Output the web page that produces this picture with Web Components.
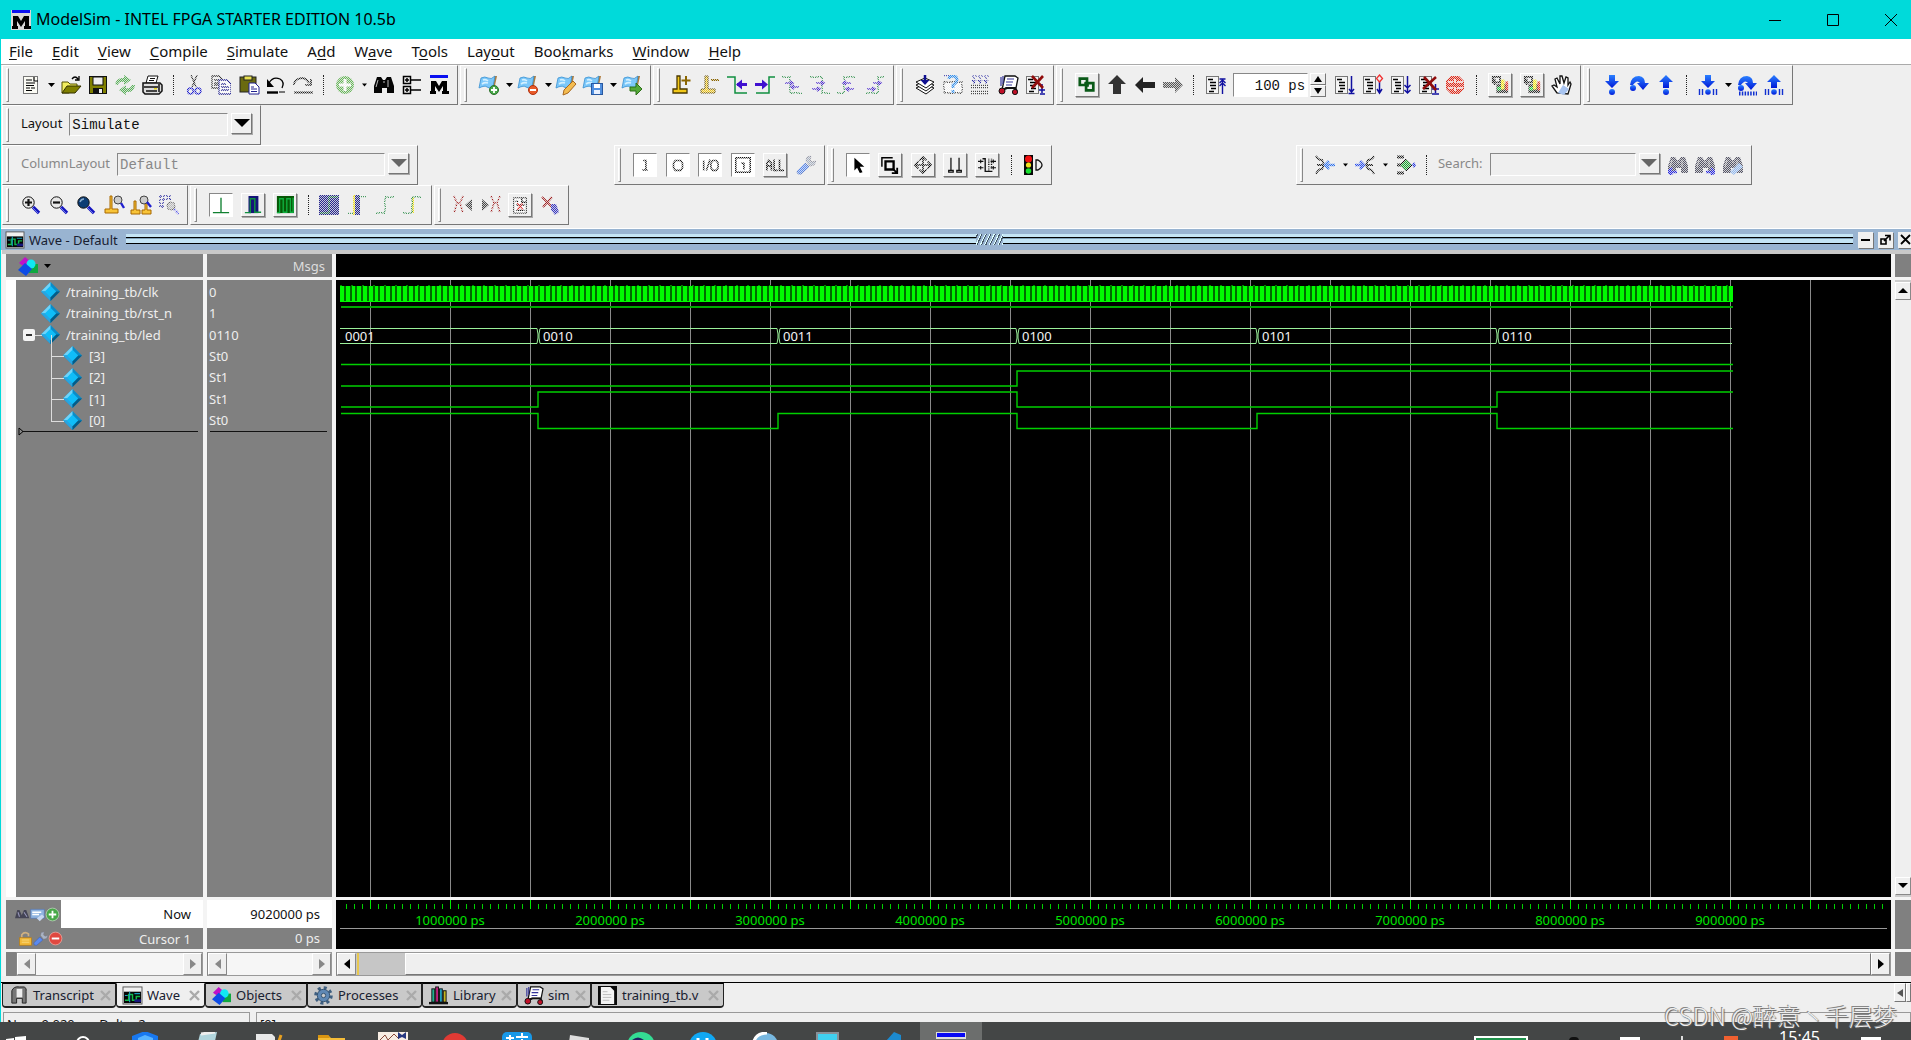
<!DOCTYPE html>
<html lang="en">
<head>
<meta charset="utf-8">
<title>ModelSim - INTEL FPGA STARTER EDITION 10.5b</title>
<style>
html,body{margin:0;height:100%;overflow:hidden}
body{font:13px/16px "Noto Sans","Noto Sans CJK SC",sans-serif;color:#111;background:#efefef}
</style>
</head>
<body>
<sim-app></sim-app>
<script>
const path = (d, s = '#000', w = 1, x = '') => `<path d="${d}" fill="none" stroke="${s}" stroke-width="${w}" ${x}/>`;
const fill = (d, f = '#000', x = '') => `<path d="${d}" fill="${f}" ${x}/>`;
const rect = (x, y, w, h, f, s = '') => `<rect x="${x}" y="${y}" width="${w}" height="${h}" fill="${f}" ${s ? `stroke="${s}"` : ''}/>`;
const circ = (x, y, r, f, s = '') => `<circle cx="${x}" cy="${y}" r="${r}" fill="${f}" ${s ? `stroke="${s}"` : ''}/>`;
const dash = 'stroke-dasharray="1 1"';

const page = rect(1.5, 1.5, 12, 17, '#f4f4f4', '#777') + path('M3 4.5h5M5 7.5h6M5 10.5h6M6 13.5h5M4 16.5h5', '#000', 1.4);
const flag = fill('M15 1h3l-3 14h-2z', '#b07c3c') + fill('M2 3q4-2 7 0t7-2l-2 11q-4 2-6 0t-8 1z', '#7cc8fa', 'stroke="#3a90d0" stroke-width=".8"') + path('M4 5q3-1 5 1M3 9q3-2 6-1', '#d4f0ff', 1.6);
const lens = f => circ(7.5, 7.5, 5.7, f, '#111') + path('M12 12l6 6', '#1515c0', 3.4) + path('M12 13l5 5', '#6a7ae8', 1);
const stairs = d => path(d, '#108030', 1.4, 'stroke-dasharray="1.5 1"');
const dot = (x, y, s) => path(`M${x - 4} ${y}h8M${x + s * 1} ${y - 2}l${s * 3} 2l${-s * 3} 2`, '#5230d0', 1.6);
const binoc = c => fill('M3 2h4l2 3h2l2-3h4l3 9v7h-7v-5H8v5H0v-7z', c) + path('M4 5l-2 7M14 5v7M9 7h2', '#bbb', 1);
const scissorsX = x => path(`M${x} 1l3 7-3 10M${x + 9} 1l-3 7 3 10M${x + 3} 8h3`, '#a02020', 1.6, 'stroke-dasharray="2 1"');
const diamonds = fill('M7 1l7 6-6 5-7-5z', '#c010c8') + rect(11, 8, 9, 9, '#0fa840') + circ(13, 8, 4.5, '#10e8f4') + fill('M7 7l7 6-6 7-8-6z', '#0d4be6');
const robot = fill('M7 1h10l3 2-2 10H8l-4 2z', '#fff', 'stroke="#111" stroke-width="1.3"') + path('M9 4h7M8 7h7M8 10h6M3 2v9M5 1v8', '#34349a', 1.2) + path('M4 15l5-2h8l2 3', '#111', 2) + circ(4, 16, 3, '#c01028', '#111') + circ(17, 17, 2.6, '#c01028', '#111');
const wave = rect(0, 1, 20, 18, '#f0f0f0', '#555') + rect(1, 6, 18, 12, '#050505') + path('M2 15h4V9h4v6h4v-4h4', '#12b848', 1.6) + path('M2 10h3M12 8h6M7 6v11', '#16a2c0', 1.2) + rect(12, 14, 7, 3, '#16167c');
const step = '<linearGradient id="b" x2="0" y2="1"><stop stop-color="#2a80ff"/><stop offset="1" stop-color="#0018d8"/></linearGradient>';
const down = 'M7 0h6v6h4l-7 7-7-7h4z', up = 'M7 13h6V7h4l-7-7-7 7h4z';
const curve = fill('M1 10Q2 1 10 1q6 1 6 7h4l-6 7-6-7h3Q8 4 4 10z', 'url(#b)') + circ(4, 13, 3, 'url(#b)');
const bars = path('M1.5 14v6M4.5 14v6M15.500 14v6M18.500 14v6', '#1030d0', 1.4);
const logo = rect(1, 0, 18, 3, '#0a10f0') + fill('M2 6h5l3 5 3-5h5v10h2v3h-7v-3h1v-5l-4 6-4-6v5h1v3H1v-3h1z', '#000');
const wrench = (c = '#5a8af0') => fill('M1 16l8-8 4 4-8 7q-4 1-4-3z', c, 'stroke="#3458b0" stroke-width=".6"') + fill('M10 6l1-4 4-1-1 4 2 2 4-1-2 4-4 1z', '#aab4c4', 'stroke="#778" stroke-width=".6"');

const ICONS = {
  doc: rect(2.5, 1.5, 14, 17, '#fbfbf4', '#777') + path('M5 5h6M5 8h9M5 10.500h8M5 13h4M10 13h4M5 15.500h6M13 2v4h4', '#000', 1.2),
  open: fill('M1 7h6l2 2h7v3L8 18H1z', '#f2ee60', 'stroke="#555000"') + fill('M1 18l5-7h14l-6 7z', '#808000', 'stroke="#333000"') + path('M11 4q3-4 6 0M18 1v4h-4', '#000', 1.3),
  save: rect(1.5, 1.5, 17, 17, '#808000', '#111') + rect(5, 2, 10, 8, '#eee', '#111') + rect(5, 13, 10, 6, '#111') + rect(11, 14, 3, 4, '#eee'),
  refresh: fill('M0 9Q2 2 9 3V0l7 5-7 5V7Q4 6 3 10z', '#58b058') + fill('M20 10q-1 8-9 7v3l-7-5 7-5v3q4 1 6-3z', '#58b058'),
  print: fill('M6 1h10l-2 7H4z', '#fff', 'stroke="#111"') + path('M8 3.500h5M7 5.500h5', '#111') + fill('M1 8h17l2 2v6l-3 3H3l-2-2z', '#ddd', 'stroke="#111" stroke-width="1.5"') + path('M2 12h14M4 16h11M17 9v8', '#111', 1.5) + rect(12, 13, 3, 1.5, '#e8d820'),
  cut: path('M7 0l5 12M13 0L8 12', '#333', 1.4) + `<circle cx="6.500" cy="16" r="2.800" fill="none" stroke="#2020d0" stroke-width="1.700"/><circle cx="14" cy="16" r="2.800" fill="none" stroke="#2020d0" stroke-width="1.700"/>`,
  copy: path('M1 1h7l3 3v9H1zM3 5h5M3 8h5M3 10h5', '#333', 1.3) + fill('M8 5h8l4 4v10H8z', '#fff', 'stroke="#202090" stroke-width="1.300"') + path('M10 9h5M10 12h8M10 15h8', '#202090', 1.3),
  paste: rect(1, 2, 16, 15, '#6a6a10', '#222') + rect(5, 1, 8, 4, '#e8e050', '#222') + fill('M10 8h6l4 4v7H10z', '#fff', 'stroke="#202090"') + path('M12 12h3M12 14h6M12 16.500h6', '#202090'),
  undo: path('M3 8q4-7 11-4 5 3 2 9', '#000', 1.3) + fill('M1 4v8h7z') + path('M1 17.500h11', '#000', 2.4) + path('M13 17h6'),
  redo: path('M16 8q-4-7-11-4-4 2-4 6M18 4v6h-6', '#222', 1.7) + path('M1 17.500h19', '#222', 2),
  plus: circ(10, 10, 9, '#6ab85c') + path('M10 4v12M4 10h12', '#fff', 3),
  find: binoc('#050505'),
  tree: path('M1.500 1.500h7v7h-7zM1.500 11.500h7v7h-7zM3 5h4M5 3v4M3 15h4M5 13v4M9 5h10M9 15h10', '#000', 1.5),
  logo,
  flagadd: flag + circ(15, 15, 4.5, '#48a848', '#2a702a') + path('M15 12v6M12 15h6', '#fff', 1.8),
  flagdel: flag + circ(15, 15, 4.5, '#e85a28', '#b03010') + path('M12 15h6', '#fff', 2),
  flagedit: flag + fill('M17 6l3 3-8 9-5 2 1-5z', '#f4bc50', 'stroke="#a86820"'),
  flagsave: flag + rect(8.5, 8.5, 11, 11, '#5090e0', '#2858a0') + rect(11, 9, 6, 4, '#fff') + rect(11, 15, 6, 4, '#e8f0ff'),
  flaggo: flag + fill('M8 12h6V8l6 6-6 6v-4H8z', '#54a838', 'stroke="#2c7018"'),
  curadd: fill('M5 1h3v13h7v4H1v-4h4z', '#f2c818', 'stroke="#4a3800" stroke-width="1.300"') + path('M14 1v9M9.500 5.500h9', '#8a6500', 2),
  curdel: fill('M5 1h3v13h7v4H1v-4h4z', '#f2c818', 'stroke="#5a4400"') + path('M11 5h8', '#8a6500', 2),
  prev: path('M0 2h8v16h12', '#109040', 1.5) + path('M10 9.500h10', '#4010d0', 3) + fill('M9 9.500l6-5v10z', '#4010d0'),
  next: path('M20 2h-6v16H1', '#109040', 1.5) + path('M0 9.500h9', '#4010d0', 3) + fill('M13 9.500l-6-5v10z', '#4010d0'),
  e1: stairs('M0 2h8v16h12') + dot(13, 12, -1) + dot(7, 8, 1),
  e2: stairs('M0 2h12v16h8') + dot(6, 14, 1) + dot(10, 8, 1),
  e3: stairs('M0 18h7V2h12') + dot(10, 8, -1) + dot(13, 14, -1),
  e4: stairs('M1 18h12V2h6') + dot(12, 8, 1) + dot(6, 14, 1),
  compile: fill('M1 13l9-4 9 4-8 6z', '#fff', 'stroke="#111"') + fill('M1 10l9-4 9 4-8 6z', '#fff', 'stroke="#111"') + fill('M1 7l9-4 9 4-8 6z', '#fff', 'stroke="#111"') + path('M10 0v7', '#101090', 2.5) + fill('M5.500 5h9l-4.500 5z', '#101090'),
  help: rect(1, 7, 18, 11, '#fff') + path('M1 7h18v11H1z', '#222', 1.3, 'stroke-dasharray="1.500 1"') + path('M1 1h12', '#2020a0', 1.5, dash) + path('M6 4q0-3 4-3t4 4q0 2-4 5v3M10 15v3', '#3090f0', 2.8),
  grid: path('M2 1h17M4 2v5M10 2v5M16 2v5M2 5l2 3 2-3M8 5l2 3 2-3M14 5l2 3 2-3', '#2020a0', 1.2, 'stroke-dasharray="2 1"') + path('M1 10h18M1 13h18M1 16h18M1 19h18', '#111', 1.7, dash),
  robot,
  stopsim: page + path('M17 9v9M14 15h6M15 19h5', '#1010a0', 1.5) + path('M7 1l11 12M18 1L7 13', '#900c0c', 2.6),
  link: path('M2 3h8v7H2zM9 8h8v8H9z', '#0a5a18', 3) + path('M7 8h4v4', '#0a5a18', 2),
  up: fill('M10 0l9 9h-5v10H6V9H1z', '#333'),
  left: fill('M0 10l8-8v5h12v6H8v5z', '#222'),
  right: fill('M20 10l-8-8v5H0v6h12v5z', '#555'),
  restart: page + path('M17.500 4v15M14.500 4h6M14.500 8l3-3 3 3M14.500 11l3-3 3 3', '#1010a0', 1.4),
  run: page + path('M17.500 1v16M14.500 18.500h6M15 14l2.500 3 2.500-3', '#1010a0', 1.5),
  runc: page + path('M17.500 6v12M15 14l2.500 4 2.500-4', '#1010a0', 1.5) + path('M17.500 0l3 3.500-3 3.500-3-3.500z', '#f03030', 1.3),
  runall: page + path('M17.500 1v17M14.500 10l3 3 3-3M14.500 15l3 3 3-3', '#1010a0', 1.5),
  brk: page + path('M17.500 9v9M14 14h7M14 19h7', '#1010a0', 1.5) + path('M6 2l12 13M18 2L5 14', '#900c0c', 2.6),
  stop: fill('M6 1h8l5 5v8l-5 5H6l-5-5V6z', '#e02818') + path('M3 7h5M3 13h5M12 7h6M12 13h6M10 4v4M10 12v4', '#fff', 1.6),
  mem: path('M2 1h8v6H2zM4 3v7', '#222', 2) + fill('M6 9h13v10H6z', '#333') + rect(11, 4, 4, 11, '#f4e810') + rect(16, 6, 3, 10, '#e83020') + rect(7, 12, 4, 4, '#20d040'),
  hand: fill('M5 18L0 11l2-1 3 2-2-8 2-1 3 6V1h2l2 7 2-6 2 1v7l2-3 1 2-3 10z', '#fff', 'stroke="#111" stroke-width="1.300"') + fill('M6 18l5-8 6 4-5 6z', '#a8c4f0'),
  into: step + fill(down, 'url(#b)') + circ(10, 17, 3, 'url(#b)'),
  over: step + curve,
  out: step + fill(up, 'url(#b)') + circ(10, 17, 3, 'url(#b)'),
  into2: step + fill(down, 'url(#b)') + circ(10, 17, 2.8, 'url(#b)') + bars,
  over2: step + curve + path('M2 18.500h18', '#1030d0', 4, 'stroke-dasharray="1.500 1.300"'),
  out2: step + fill(up, 'url(#b)') + circ(10, 17, 2.8, 'url(#b)') + bars,
  ti: path('M8 5h3v10M7 15.500h6', '#222', 1.8),
  to: path('M7 5h6l2 3v5l-2 3H7l-2-3V8z', '#222', 1.8),
  tio: path('M3 5v11M10 4L6 16M13 5h4l2 3v5l-2 3h-4l-2-3V8z', '#222', 1.8),
  tbox: path('M2 2h16v16H2zM8 8h3v7', '#111', 1.7),
  tall: path('M1 16V8l2-3 3 3v8M1 11h5M9 4v12h4M15 4v12h5', '#111', 1.8),
  wrench: wrench(),
  cursor: fill('M6 2v14l3-3 3 6 3-1-3-6h5z'),
  zoomsel: path('M1 12V2h12', '#000', 1.6) + path('M5 6h9v9H5z', '#000', 2.6) + path('M13 14l5 5M18 13v6h-6', '#000', 2),
  pan: path('M10 1v18M1 10h18M6 5l4-4 4 4M6 15l4 4 4-4M5 6l-4 4 4 4M15 6l4 4-4 4', '#111', 1.8),
  twocur: path('M5.500 2v14M14.500 2v14M3 16h5v2H3zM12 16h5v2h-5z', '#111', 1.4),
  edges: path('M5 3h3v14h8', '#111', 1.5) + path('M12 3v14M15 3v12', '#111', 1.5, dash) + path('M0 6h6M0 13h6M14 6h6M14 13h6M3 4v4M3 11v4M17 4v4M17 11v4', '#111', 1.2),
  light: rect(1, 0, 9, 20, '#080808') + circ(5.5, 4, 3.5, '#f01010') + circ(5.5, 10, 2.6, '#f0e020') + circ(5.5, 16, 2.8, '#18e030') + path('M13 5h2q8 5 0 10h-2z', '#111', 1.3),
  joinl: path('M1 1q2 4 6 4l2 5-2 4q-4 0-6 5M2 10h6', '#222', 1.8) + path('M11 10h9M14 6l-4 4 4 4', '#2a70f0', 2.6),
  joinr: path('M19 1q-2 4-6 4l-2 5 2 4q4 0 6 5M18 10h-6', '#222', 1.8) + path('M0 10h8M5 6l4 4-4 4', '#2a50f0', 2.6),
  node: path('M1 2h7M1 10h5M1 18h7', '#222', 3) + fill('M10 4l6 6-6 6-6-6z', '#1aa030', 'stroke="#111"') + fill('M18 7l2 3-2 3-2-3z', '#2030e0'),
  findl: binoc('#556') + path('M0 17h9M4 13l-4 4 4 3', '#2828e0', 2.4),
  findr: binoc('#556') + path('M11 17h9M16 13l4 4-4 3', '#2828e0', 2.4),
  findo: binoc('#556') + fill('M7 17l9-9 4 4-9 8z', '#90b8f0'),
  zin: lens('#e8e8e8') + path('M7.500 4v7M4 7.500h7', '#111', 2.2),
  zout: lens('#e8e8e8') + path('M4 7.500h7', '#111', 2.2),
  zfull: lens('#0c3c74') + path('M4 7q1-3 4-3', '#8ac', 1.4),
  zcur: fill('M6 1h2v13h6v4H1v-4h5z', '#f8c438', 'stroke="#a86800"') + circ(14, 5, 4, '#ccc', '#444') + path('M17 8l3 5', '#2020d0', 2.4),
  zcur2: fill('M3 6h2v9h4v4H0v-4h3zM14 6h2v9h4v4h-9v-4h3z', '#f8c438', 'stroke="#a86800"') + circ(13, 5, 4, '#ccc', '#444') + path('M16 7l4 5', '#2020d0', 2.4),
  zsel: path('M1 1h10v5M1 1v11h4M4 4h9M4 4v9', '#2828a0', 1.5, 'stroke-dasharray="2 1"') + circ(12, 11, 4, '#bbb', '#666') + path('M15 14l5 5', '#5a5af0', 2.4, 'stroke-dasharray="2 1"'),
  c1: path('M1 18.500h18M10 18V2', '#108030', 1.5),
  c2: rect(5, 0, 11, 19, '#141478') + path('M1 18.500h6V3h5v15h7', '#109040', 1.6),
  c3: rect(1, 0, 19, 19, '#065806') + path('M1 18.500h3V3h4v15h4V3h4v15h3V2', '#10b040', 1.5),
  g1: rect(0, 0, 20, 20, '#28288c') + path('M1 18h9V2h9', '#208040', 1.3),
  g2: rect(8, 0, 5, 20, '#28288c') + path('M7 0v20', '#f0e020', 2) + path('M1 18h5M12 2h8', '#108030', 1.6, dash),
  g3: stairs('M1 18h9V2h9'),
  g4: path('M10 2v16', '#f0e020', 2) + stairs('M0 18h9V2h10'),
  x1: scissorsX(1) + fill('M19 4v12l-7-6z', '#444'),
  x2: scissorsX(10) + fill('M1 4v12l7-6z', '#444'),
  xdoc: rect(3, 2, 14, 17, '#fff', '#111') + path('M12 2v5h5M5 6h3M6 10h9M6 16h9', '#111', 1.6) + path('M7 8l6 7M13 8l-6 7', '#e02020', 1.6),
  xpen: path('M2 2l12 12M12 2L3 12', '#a02020', 2) + fill('M11 9l5 0 3 8-4 3-4-5z', '#3838c0'),
  diamonds, wave,
  transcript: fill('M3 18V5q2-5 8-4h5q3 1 2 5v12h-4v-5H8v5z', '#777', 'stroke="#222"') + rect(8, 3, 6, 9, '#eee'),
  gear: `<circle cx="10" cy="10" r="8" fill="none" stroke="#3f5f80" stroke-width="3.500" stroke-dasharray="3.140"/>` + circ(10, 10, 6.5, '#5f88b4', '#34526f') + circ(10, 10, 2.3, '#ccc', '#34526f'),
  library: rect(3, 3, 3, 14, '#20b090', '#111') + rect(7, 1, 3, 16, '#c02080', '#111') + rect(11, 3, 3, 14, '#20a0c0', '#111') + rect(15, 5, 3, 12, '#c8b820', '#111') + path('M0 18h20', '#111', 2.5),
  file: rect(0, 0, 20, 20, '#0a0a0a') + fill('M3 1h10l4 4v14H3z', '#f4f4f4') + path('M5 6h5M5 9h9M5 12h9M5 15h7', '#bbb'),
  a: fill('M0 15l3-11h3l3 7 3-7h3l4 11z', '#445') + path('M4 7l2 6M12 7l4 6', '#99b', 1.4),
  b: rect(1, 3, 18, 12, '#8fb4e0', '#5878b0') + path('M3 7h12M3 10h9', '#fff', 2) + fill('M9 15l7-5 3 3-6 6z', '#c8d8f0'),
  add: circ(10, 10, 8.5, '#48a848', '#bcd8bc') + path('M10 5v10M5 10h10', '#fff', 2.4),
  lock: path('M5 9V5q4-5 9-1v3', '#d0b080', 2.2) + rect(2, 9, 16, 10, '#f2b838', '#b47c18') + path('M5 12h10M5 15h10', '#f8d880', 1.2),
  del: circ(10, 10, 8.5, '#e04840', '#f0a8a0') + path('M5 10h10', '#fff', 2.6)
};
const svg = (n, s = 20) => `<svg width="${s}" height="${s}" viewBox="0 0 20 20" overflow="visible" aria-hidden="true">${ICONS[n] || ''}</svg>`;
const RESET = `*{box-sizing:border-box}button{font:inherit;color:inherit;border:0;padding:0;background:none;display:block}svg{display:block}`;

function define(name, css, html) {
  customElements.define(name, class extends HTMLElement {
    connectedCallback() {
      if (this.shadowRoot) return;
      this.attachShadow({mode: 'open'}).innerHTML =
        `<style>${RESET}${css}</style>${typeof html === 'function' ? html(k => this.getAttribute(k)) : html}`;
    }
  });
}

/* Icon button; frame="up" is raised, frame="down" is sunken. */
define('tool-button', `
  :host{display:block;flex:none;width:20px}
  :host([frame]){width:24px}
  button{width:100%;height:20px}
  :host([frame]) button{height:24px;display:grid;place-items:center;border:1px solid;border-color:#fff #777 #777 #fff;box-shadow:1px 1px 0 #aaa}
  :host([frame=down]) button{background:#fff;border-color:#888 #fff #fff #888;box-shadow:none}
  :host([off]) svg{-webkit-mask:repeating-conic-gradient(#000 0 25%,#0003 0 50%) 0 0/2px 2px;mask:repeating-conic-gradient(#000 0 25%,#0003 0 50%) 0 0/2px 2px}
`, g => `<button aria-label="${g('icon')}">${svg(g('icon'), g('frame') ? 18 : 20)}</button>`);

define('drop-arrow', `:host{display:block;flex:none;width:5px}
  button{width:5px;height:20px;display:grid;place-items:center}
  :host([off]) svg{width:5px}`,
  g => `<button aria-label="more"><svg width="7" height="4" viewBox="0 0 7 4"><path d="M0 0h7l-3.500 4z"/></svg></button>`);

define('tool-sep', `:host{display:block;flex:none;width:7px}i{display:block;margin:auto;width:0;height:20px;border-left:1px dotted #222}`, '<i></i>');

define('tool-bar', `
  :host{display:flex;flex:none;align-items:center;justify-content:space-between;height:40px;padding:0 8px 0 18px;
    border:1px solid;border-color:#fff #777 #777 #fff;position:relative}
  i{position:absolute;left:3px;top:2px;bottom:2px;width:3px;border:1px solid;border-color:#fff #888 #888 #fff}
`, '<i></i><slot></slot>');

define('combo-box', `
  :host{display:flex;align-items:center;flex:1;padding-bottom:2px}
  :host([off]){color:#888}
  label{padding-right:7px;line-height:20px;padding-bottom:2px}
  .f{flex:1;display:flex;gap:3px}
  select{appearance:none;flex:1;min-width:0;height:23px;margin:0;padding:1px 2px 0;border:1px solid;border-color:#888 #fff #fff #888;border-radius:0;background:none;color:inherit;font:14px/20px "Liberation Mono",monospace;opacity:1}
  span{width:21px;height:21px;border:1px solid;border-color:#fff #777 #777 #fff;box-shadow:1px 1px 0 #aaa;display:grid;place-items:center;pointer-events:none}
`, g => `<label for="s">${g('label')}</label><div class="f"><select id="s">${g('value') ? `<option>${g('value')}</option>` : ''}</select><span><svg width="16" height="8"><path d="M0 0h16l-8 8z" fill="${g('off') !== null ? '#666' : '#000'}"/></svg></span></div>`);

define('run-length', `
  :host{display:flex;flex:none;width:93px;gap:2px}
  input{width:75px;height:24px;margin:0;padding:1px 2px 0 0;border:1px solid;border-color:#888 #fff #fff #888;border-radius:0;background:#fff;text-align:right;font:14px/20px "Liberation Mono",monospace;color:#111}
  div{width:16px}
  button{width:16px;height:12px;border:1px solid;border-color:#fff #777 #777 #fff;display:grid;place-items:center}
`, `<input aria-label="Run length" value="100 ps"><div><button aria-label="Increase"><svg width="8" height="6"><path d="M4 0l4 6H0z"/></svg></button><button aria-label="Decrease"><svg width="8" height="6"><path d="M0 0h8L4 6z"/></svg></button></div>`);

define('title-bar', `
  :host{display:flex;align-items:center;height:39px;background:#00dada;padding-left:11px;font-size:15px;color:#000}
  .l{width:20px;height:20px;background:#d8d8d8;margin-right:5px}
  h1{font:inherit;font-size:16px;margin:0;padding-bottom:2px;flex:1}
  button{width:58px;height:39px;display:grid;place-items:center}
  .w{display:flex;margin-right:-9px}
`, `<div class="l">${svg('logo')}</div><h1>ModelSim - INTEL FPGA STARTER EDITION 10.5b</h1>
  <div class="w"><button aria-label="Minimize"><svg width="12" height="12"><path d="M0 6.500h12" stroke="#000"/></svg></button><button aria-label="Maximize"><svg width="12" height="12"><path d="M.5.5h11v11H.5z" stroke="#000" fill="none"/></svg></button><button aria-label="Close"><svg width="12" height="12"><path d="M0 0l12 12M12 0L0 12" stroke="#000"/></svg></button></div>`);

define('menu-bar', `:host{display:block}
  nav{display:flex;gap:19px;height:26px;background:#fff;padding:0 8px 2px;align-items:center;font-size:15px;border-bottom:1px solid #aaa}
  u{text-underline-offset:2px}`,
  '<nav>' + ['_File', '_Edit', '_View', '_Compile', '_Simulate', 'A_dd', 'W_ave', 'T_ools', 'Lay_out', 'Boo_kmarks', '_Window', '_Help']
    .map(t => `<button>${t.replace(/_(.)/, '<u>$1</u>')}</button>`).join('') + '</nav>');

/* Toolbar items: '|' separator, 'v' drop arrow, '-name' greyed, '^name' raised, '_name' sunken. */
const items = s => s.split(' ').map(t => {
  if (t === '|') return '<tool-sep></tool-sep>';
  if (t === 'v') return '<drop-arrow></drop-arrow>';
  if (t === '-v') return '<drop-arrow off></drop-arrow>';
  if (t === '#') return '<run-length></run-length>';
  const m = t.match(/^([\^_]?)(-?)(.*)$/);
  return `<tool-button icon="${m[3]}" ${m[1] ? `frame="${m[1] === '^' ? 'up' : 'down'}"` : ''} ${m[2] ? 'off' : ''}></tool-button>`;
}).join('');
const bar = (w, s, c = '') => `<tool-bar class="${c}" style="width:${w}px">${s[0] === '<' ? s : items(s)}</tool-bar>`;

define('tool-area', `
  :host{display:block;padding-left:1px}
  .r{display:flex;gap:2px}
  .far{margin-left:194px}.farther{margin-left:242px}
  .search combo-box{flex:none;width:222px}
`, `
<div class="r">
  ${bar(456, 'doc v open save -refresh print | -cut -copy paste undo -redo | -plus -v find tree logo')}
  ${bar(191, 'flagadd v flagdel v flagedit flagsave v flaggo')}
  ${bar(241, 'curadd -curdel prev next -e1 -e2 -e3 -e4')}
  ${bar(158, 'compile -help -grid robot stopsim')}
  ${bar(525, '^link up left -right | restart # run runc runall brk -stop | ^-mem ^-mem hand')}
  ${bar(210, 'into over out | into2 v over2 out2')}
</div>
<div class="r">${bar(259, '<combo-box label="Layout" value="Simulate"></combo-box>')}</div>
<div class="r">
  ${bar(416, '<combo-box off label="ColumnLayout" value="Default"></combo-box>')}
  ${bar(211, '_-ti _-to _-tio _-tbox ^-tall -wrench', 'far')}
  ${bar(225, '_cursor ^zoomsel ^-pan ^twocur ^edges | light')}
  ${bar(456, '<!-- -->' + items('-joinl -v -joinr -v -node |') + '<combo-box off label="Search:"></combo-box>' + items('-findl -findr -findo'), 'farther search')}
</div>
<div class="r">
  ${bar(186, 'zin zout zfull zcur zcur2 -zsel')}
  ${bar(242, '_c1 ^c2 ^c3 | -g1 -g2 -g3 -g4')}
  ${bar(135, '-x1 -x2 ^-xdoc -xpen')}
</div>`);

define('pane-title', `
  :host{display:flex;align-items:center;height:22px;background:#99b4d1;padding-left:5px;margin-top:3px;border-top:1px solid #fff}
  h2{font:inherit;margin:0 8px 0 5px;color:#182030}
  .s{flex:1;height:11px;display:flex;justify-content:center;background:linear-gradient(#c4e4f4 3px,#000 3px 4px,#7fa0b8 4px 5px,#c4e4f4 5px 9px,#000 9px 10px,transparent 10px)}
  .g{width:27px;background:repeating-linear-gradient(115deg,#dff 0 1px,#456 1px 2px,#99b4d1 2px 4px)}
  .b{display:flex;gap:5px;margin:0 -2px 0 5px}
  .b button{width:15px;height:16px;background:#f0f0f0;box-shadow:1px 1px 0 #777;display:grid;place-items:center}
`, `${svg('wave', 18)}<h2>Wave - Default</h2><div class="s"><div class="g"></div></div>
<div class="b"><button aria-label="Minimize pane"><svg width="11" height="11"><path d="M1 5h9v2H1z"/></svg></button><button aria-label="Undock pane"><svg width="11" height="11"><path d="M1 5h5v5H1zM4 7l5-5M5 1.500h5v5" fill="none" stroke="#000" stroke-width="1.600"/></svg></button><button aria-label="Close pane"><svg width="11" height="11"><path d="M1 1l9 9M10 1l-9 9" stroke="#000" stroke-width="1.800"/></svg></button></div>`);

const gem = '<svg class="gem" width="19" height="19" viewBox="0 0 20 20"><path d="M10 0l10 10-10 10L0 10z" fill="#0a8cc8"/><path d="M10 0v10H0z" fill="#70d4fa"/><path d="M0 10h10v10z" fill="#2aa4e0"/><path d="M20 10H10v10z" fill="#045c88"/><path d="M10 4l6 6-6 6-6-6z" fill="#10bdf8"/></svg>';
define('signal-names', `
  :host{display:block;background:#808080;border-left:10px solid #fff;color:#eee}
  ul{list-style:none;margin:0;padding:1px 0 0;height:151px;display:flex;flex-direction:column}
  li{flex:1;display:flex;align-items:center;padding-left:25px;gap:6px;position:relative}
  li.k{padding-left:47px;gap:7px}
  .k::before{content:"";position:absolute;left:35px;top:-10px;height:21px;width:12px;border:solid #ddd;border-width:0 0 1px 1px}
  .gem{flex:none}
  button{position:absolute;left:7px;width:12px;height:12px;background:#f4f4f4;border-radius:2px}
  button::before{content:"";position:absolute;left:3px;right:3px;top:5px;height:2px;background:#333}
  button::after{content:"";position:absolute;left:12px;top:6px;width:7px;height:1px;background:#ddd}
  .end{height:1px;background:#111;margin:0 5px 0 4px;position:relative}
  .end svg{position:absolute;left:-2px;top:-4px}
`, '<ul>' + ['/training_tb/clk', '/training_tb/rst_n'].map(t => `<li>${gem}<span>${t}</span></li>`).join('') +
  `<li><button aria-label="Collapse"></button>${gem}<span>/training_tb/led</span></li>` +
  [3, 2, 1, 0].map(n => `<li class="k">${gem}<span>[${n}]</span></li>`).join('') + '</ul><div class="end"><svg width="6" height="9"><path d="M1 1l4 3.500L1 8z" fill="#888" stroke="#000"/></svg></div>');

define('signal-values', `
  :host{display:block;background:#808080;color:#eee}
  ul{list-style:none;margin:0;padding:1px 0 0 2px;height:151px;display:flex;flex-direction:column}
  li{flex:1;display:flex;align-items:center}
  .end{height:1px;background:#111;margin:0 5px 0 3px}
`, '<ul>' + ['0', '1', '0110', 'St0', 'St1', 'St1', 'St0'].map(t => `<li>${t}</li>`).join('') + '</ul><div class="end"></div>');

/* Waveforms: 80px per half microsecond, bus value changes every 240px. */
const T = [202, 442, 681, 921, 1161], END = 1397;
function waves() {
  let s = '';
  for (let i = 0; i < 19; i++) s += `<path d="M${34.5 + 80 * i} 0V2000" stroke="#8a8a8a"/>`;
  s += '<rect x="4" y="6" width="1393" height="16" fill="#00fa00"/><path d="M4 5.500H1397" stroke="#008000" stroke-dasharray="2 9"/>';
  let gaps = '';
  for (let k = 0; k < 243; k++) gaps += `M${Math.round(9 + k * 40 / 7)} 6v15`;
  s += `<path d="${gaps}" stroke="#003c00" stroke-width="1.500"/>`;
  s += `<path d="M5 27H${END}" stroke="#00a800" stroke-width="2"/>`;
  const pts = [4, ...T, END];
  ['0001', '0010', '0011', '0100', '0101', '0110'].forEach((v, i) => {
    const a = pts[i], b = pts[i + 1], l = i ? `M${a + 1} 56v-2l1-5.500` : `M${a} 48.500`, r = i < 5;
    s += `<path d="${l}H${b - 1}${r ? 'l1 5.500v2' : ''}M${i ? a + 1 + ' 56v2l1 5.500' : a + ' 63.500'}H${b - 1}${r ? 'l1-5.500v-2' : ''}" stroke="#9af09a" fill="none"/>`;
    s += `<text x="${i ? a + 5 : 9}" y="61" fill="#f4f4f4">${v}</text>`;
  });
  const bit = (hi, lo, bits) => {
    let d = `M5 ${bits[0] ? hi : lo}`;
    T.forEach((x, i) => { d += `H${x}V${bits[i + 1] ? hi : lo}`; });
    return `<path d="${d}H${END}" fill="none" stroke="#00d000" stroke-width="1.400"/>`;
  };
  return s + bit(70, 84.5, [0, 0, 0, 0, 0, 0]) + bit(91, 106, [0, 0, 0, 1, 1, 1]) + bit(112, 127, [0, 1, 1, 0, 0, 1]) + bit(133.5, 148.5, [1, 0, 1, 0, 1, 0]);
}
define('wave-view', ':host{display:block;background:#000;overflow:hidden;min-height:0}svg{width:100%;height:100%}', `<svg aria-label="waveforms">${waves()}</svg>`);

function ruler() {
  let s = '<path d="M4 28.500H1551" stroke="#999"/>';
  for (let x = 10; x < 1550; x += 8) s += (x - 34) % 80 ? `<path d="M${x + .5} 4v5" stroke="#00d000"/>` : `<path d="M${x + .5} 0v9" stroke="#00e800"/>`;
  for (let i = 1; i < 10; i++) s += `<text x="${160 * i - 46}" y="25" text-anchor="middle" fill="#00e400">${i}000000 ps</text>`;
  return s;
}
define('time-ruler', ':host{display:block;background:#000;overflow:hidden}svg{width:100%;height:49px}', `<svg>${ruler()}</svg>`);

define('cursor-names', `
  :host{display:block;background:#808080}
  div{display:flex;height:28px;color:#111}
  .c{height:21px;color:#eee}
  .i{display:flex;width:55px;height:auto;align-items:center;padding-left:9px}
  .c .i{padding-left:12px;width:59px}
  .t{flex:1;align-items:center;justify-content:flex-end;padding-right:12px;display:flex;background:#fff}
  .c .t{background:none;color:inherit}
`, `<div><div class="i">${svg('a', 15)}${svg('b', 15)}${svg('add', 15)}</div><span class="t">Now</span></div>
<div class="c"><div class="i">${svg('lock', 15)}${svg('wrench', 15)}${svg('del', 15)}</div><span class="t">Cursor 1</span></div>`);
define('cursor-values', `
  :host{display:block;background:#808080}
  div{height:28px;line-height:28px;background:#fff;color:#111;text-align:right;padding-right:12px}
  .c{height:21px;line-height:21px;background:none;color:#eee}
`, '<div>9020000 ps</div><div class="c">0 ps</div>');

const tri = {l: 'M7 0v10L1 5z', r: 'M1 0v10l6-5z', u: 'M0 7h10L5 2z', d: 'M0 2h10L5 7z'};
define('scroll-strip', `
  :host{display:flex;background:#f6f6f6;border:1px solid #999;border-left-color:#888}
  :host([vertical]){flex-direction:column}
  button{flex:none;width:19px;display:grid;place-items:center;background:#efefef;border:1px solid;border-color:#fff #888 #888 #fff}
  :host([vertical]) button{width:100%;height:18px}
  :host([vertical]){border-width:2px 0;border-color:#ccc;background:#efefef}
  .t{flex:1;display:flex}
  :host([live]) .t{background:#c6c6c6}
  .m{width:48px;border-left:2px solid #e8c850;margin-left:1px}
  .h{flex:1;background:#efefef;border:1px solid;border-color:#fff #777 #777 #fff}
`, g => {
  const v = g('vertical') !== null, c = v || g('live') !== null ? '#000' : '#888';
  const b = (k, n) => `<button aria-label="${n}"><svg width="10" height="10" viewBox="${v ? '0 0 10 10' : '-1 0 10 10'}"><path d="${tri[k]}" fill="${c}"/></svg></button>`;
  return b(v ? 'u' : 'l', 'back') + `<div class="t">${g('live') !== null ? '<div class="m"></div><div class="h"></div>' : ''}</div>` + b(v ? 'd' : 'r', 'forward');
});

define('wave-pane', `
  :host{display:flex;flex-direction:column;flex:1;min-height:0}
  .g{flex:1;min-height:0;display:grid;grid-template-columns:197px 125px minmax(0,1fr) 16px;grid-template-rows:23px minmax(0,1fr) 49px 24px;gap:3px 4px;background:#f4f4f4;border-top:4px solid #c8c8c8;margin-left:1px;padding-left:4px}
  .h{background:#808080;color:#ddd;display:flex;align-items:center}
  .k{background:#000}
  .x{padding-left:12px;gap:6px}
  .m{justify-content:flex-end;padding-right:7px}
  .p{background:#808080;padding-left:10px;display:grid}
`, `<pane-title></pane-title><div class="g">
  <div class="h x">${svg('diamonds')}<drop-arrow></drop-arrow></div><div class="h m">Msgs</div><div class="k"></div><div class="h"></div>
  <signal-names></signal-names><signal-values></signal-values><wave-view></wave-view><scroll-strip vertical></scroll-strip>
  <cursor-names></cursor-names><cursor-values></cursor-values><time-ruler></time-ruler><div class="h"></div>
  <div class="p"><scroll-strip></scroll-strip></div><scroll-strip></scroll-strip><scroll-strip live></scroll-strip><div class="h"></div></div>`);

define('tab-item', `
  :host{display:block;flex:none}
  div{height:25px;display:flex;align-items:center;background:#c9c9c9;border:1px solid #222;border-top-color:#000;border-bottom-width:2px;border-radius:0 0 4px 4px;padding:0 4px 0 6px;color:#182030}
  :host([on]) div{background:#efefef;border-top-color:#efefef}
  span{flex:1;padding-left:5px}
  button{width:11px;height:11px}
`, g => `<div>${svg(g('icon'), 19)}<span>${g('text')}</span><button aria-label="Close ${g('text')}"><svg width="11" height="11"><path d="M1 1l9 9M10 1l-9 9" stroke="#aaa" stroke-width="2.400"/></svg></button></div>`);
define('tab-strip', `
  :host{display:flex;height:30px;margin-top:6px;border-top:1px solid #000;padding-left:1px}
  .n{margin-left:auto;display:flex}
  .n button{height:19px;width:12px;background:#efefef;border:1px solid;border-color:#fff #777 #777 #fff;display:grid;place-items:center}
  .n button:last-child{width:5px}
`, [['transcript', 'Transcript', 114], ['wave', 'Wave', 89], ['diamonds', 'Objects', 102], ['gear', 'Processes', 115], ['library', 'Library', 95], ['robot', 'sim', 74], ['file', 'training_tb.v', 133]]
  .map(([i, t, w], n) => `<tab-item icon="${i}" text="${t}" style="width:${w}px" ${n === 1 ? 'on' : ''}></tab-item>`).join('') +
  '<div class="n"><button aria-label="Scroll tabs"><svg width="6" height="8"><path d="M6 0v8L0 4z" fill="#555"/></svg></button><button aria-label="Scroll tabs right"></button></div>');

define('status-bar', `
  :host{display:flex;gap:6px;height:10px;padding-left:2px;overflow:hidden;line-height:16px}
  div{border:1px solid #999;border-bottom:0;height:24px;padding:3px 3px 0}
  .a{width:247px;white-space:pre}.b{flex:1}
`, '<div class="a">Now: 9,020 ns  Delta: 2</div><div class="b">[0]</div>');

const TASKS = [
  '<path d="M0 7l8-1v8H0zM9 5l11-1v10H9z" fill="#fff"/>',
  '<circle cx="15" cy="11" r="6" fill="none" stroke="#fff" stroke-width="2"/>',
  '<path d="M2 4L15-1l13 5v14H2z" fill="#1878f0"/><path d="M8 6l7-3 8 3v12H8z" fill="#58b4ff"/>',
  '<path d="M8 2l17-2-4 18H4z" fill="#b0d4dc"/><path d="M9 2l14-2" stroke="#eee" stroke-width="3"/>',
  '<path d="M2 2h16l3 3v13H2z" fill="#e8e8e8"/><path d="M27 3l-5 15" stroke="#e8a020" stroke-width="3"/>',
  '<path d="M2 3h10l3 3h14v12H2z" fill="#f4bc38"/><path d="M2 3h10l2 3H2z" fill="#d89410"/>',
  '<path d="M0 0h30v18H0z" fill="#f8eee4"/><path d="M2 8l5-5 3 5 6-6 5 5" stroke="#884838" fill="none"/><path d="M20 0l4 3 4-3v7l-4-2-4 2z" fill="#283880"/>',
  '<circle cx="15" cy="14" r="13" fill="#e03a34"/>',
  '<rect width="30" height="24" y="0" rx="5" fill="#1898e8"/><path d="M8 3v13M4 6h8M20 1v5M14 5h12M20 7v8" stroke="#fff" stroke-width="2"/>',
  '<path d="M6 3l19 3v12H4z" fill="#ddd"/>',
  '<circle cx="15" cy="14" r="14" fill="#34dc94"/><path d="M5 9q7-7 14 0v9H5z" fill="#202060"/>',
  '<circle cx="15" cy="14" r="14" fill="#10a8f4"/><path d="M10 6v3M19 6v3" stroke="#fff" stroke-width="3"/>',
  '<circle cx="16" cy="13" r="12" fill="#78b8e0"/><path d="M3 14Q4 1 17 1" stroke="#fff" stroke-width="3" fill="none"/>',
  '<rect x="4" width="23" height="20" fill="#889098"/><rect x="6" y="2" width="19" height="16" fill="#40d0f0"/>',
  '<path d="M20 0l7 3v15H10l2-9z" fill="#1c8ad0"/>',
  '<path d="M0 0h30v7H0z" fill="#ddd"/><path d="M1 1h28v4H1z" fill="#0808f4"/>'
];
define('task-bar', `
  :host{display:flex;height:18px;background:#444646;overflow:hidden;color:#fff;position:relative;z-index:1}
  nav{display:flex;margin-left:-10px}
  button{width:62px;height:40px;padding:10px 16px 0;display:flex;align-items:flex-start}
  button:last-child{background:#6c6e6d}
  .t{margin-left:auto;display:flex;padding-top:14px;gap:41px;align-items:flex-start}
  time{font-size:16px;line-height:16px;margin-top:-7px}
  .n{width:20px;height:6px;background:#fff;margin:1px 30px 0 0}
  .e{width:54px;height:5px;border:2px solid #fff;background:#20924c;border-bottom:0}
  .c{width:10px;height:4px;background:#111;border-radius:5px 5px 0 0;margin-top:1px}
  .w{width:20px;height:4px;background:#fff;margin-top:1px}
  .o{width:14px;height:4px;background:#f06030}
  .m{width:2px;height:5px;background:#ddd}
`, `<nav>${TASKS.map((t, i) => `<button aria-label="Task ${i + 1}"><svg width="30" height="18">${t}</svg></button>`).join('')}</nav>
<div class="t"><div class="e"></div><div class="c"></div><div class="w"></div><div class="m"></div><div class="o"></div><time>15:45</time><div class="n"></div></div>`);

define('sim-app', `
  :host{display:flex;flex-direction:column;height:100vh;overflow:hidden;position:relative}
  main{flex:1;min-height:0;display:flex;flex-direction:column;border-left:1px solid #00dada;overflow:hidden}
  .wm{position:absolute;right:14px;bottom:11px;z-index:2;font:300 24px/26px "Noto Sans CJK SC",sans-serif;color:#eee;text-shadow:-1px -1px 0 #888,1px 1px 1px #555}
`, `<title-bar></title-bar><main><menu-bar></menu-bar><tool-area></tool-area><wave-pane></wave-pane><tab-strip></tab-strip><status-bar></status-bar></main><task-bar></task-bar><div class="wm">CSDN @醉意丶千层梦</div>`);
</script>
</body>
</html>
